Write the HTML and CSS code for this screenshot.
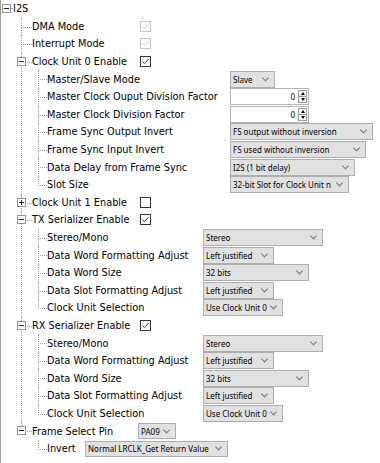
FILE: index.html
```html
<!DOCTYPE html>
<html>
<head>
<meta charset="utf-8">
<link rel="stylesheet" href="styles.css">
</head>
<body>
<div class="panel">
  <ul class="tree">
    <li class="node">
      <span class="exp"></span>
      <div class="row"><span class="label">I2S</span></div>
      <ul class="branch">
        <li class="node">
          <div class="row"><span class="label">DMA Mode</span><span class="cb cb--disabled"><svg viewBox="0 0 9 9"><path d="M1.5 4.5l2 2 4-4.5"/></svg></span></div>
        </li>
        <li class="node">
          <div class="row"><span class="label">Interrupt Mode</span><span class="cb cb--disabled"><svg viewBox="0 0 9 9"><path d="M1.5 4.5l2 2 4-4.5"/></svg></span></div>
        </li>
        <li class="node">
          <span class="exp"></span>
          <div class="row"><span class="label">Clock Unit 0 Enable</span><span class="cb"><svg viewBox="0 0 9 9"><path d="M1.5 4.5l2 2 4-4.5"/></svg></span></div>
          <ul class="branch branch--sub branch--clock">
            <li class="node"><div class="row"><span class="label">Master/Slave Mode</span><span class="combo w45"><span class="combo-text">Slave</span></span></div></li>
            <li class="node"><div class="row"><span class="label">Master Clock Ouput Division Factor</span><span class="spin"><span class="spin-val">0</span><span class="spin-btns"><i class="spin-up"></i><i class="spin-down"></i></span></span></div></li>
            <li class="node"><div class="row"><span class="label">Master Clock Division Factor</span><span class="spin"><span class="spin-val">0</span><span class="spin-btns"><i class="spin-up"></i><i class="spin-down"></i></span></span></div></li>
            <li class="node"><div class="row"><span class="label">Frame Sync Output Invert</span><span class="combo w143"><span class="combo-text">FS output without inversion</span></span></div></li>
            <li class="node"><div class="row"><span class="label">Frame Sync Input Invert</span><span class="combo w136"><span class="combo-text">FS used without inversion</span></span></div></li>
            <li class="node"><div class="row"><span class="label">Data Delay from Frame Sync</span><span class="combo w125"><span class="combo-text">I2S (1 bit delay)</span></span></div></li>
            <li class="node"><div class="row"><span class="label">Slot Size</span><span class="combo w119"><span class="combo-text">32-bit Slot for Clock Unit n</span></span></div></li>
          </ul>
        </li>
        <li class="node">
          <span class="exp exp--plus"></span>
          <div class="row"><span class="label">Clock Unit 1 Enable</span><span class="cb"></span></div>
        </li>
        <li class="node">
          <span class="exp"></span>
          <div class="row"><span class="label">TX Serializer Enable</span><span class="cb"><svg viewBox="0 0 9 9"><path d="M1.5 4.5l2 2 4-4.5"/></svg></span></div>
          <ul class="branch branch--sub branch--serial">
            <li class="node"><div class="row"><span class="label">Stereo/Mono</span><span class="combo w120"><span class="combo-text">Stereo</span></span></div></li>
            <li class="node"><div class="row"><span class="label">Data Word Formatting Adjust</span><span class="combo w71"><span class="combo-text">Left justified</span></span></div></li>
            <li class="node"><div class="row"><span class="label">Data Word Size</span><span class="combo w106"><span class="combo-text">32 bits</span></span></div></li>
            <li class="node"><div class="row"><span class="label">Data Slot Formatting Adjust</span><span class="combo w71"><span class="combo-text">Left justified</span></span></div></li>
            <li class="node"><div class="row"><span class="label">Clock Unit Selection</span><span class="combo w80"><span class="combo-text">Use Clock Unit 0</span></span></div></li>
          </ul>
        </li>
        <li class="node">
          <span class="exp"></span>
          <div class="row"><span class="label">RX Serializer Enable</span><span class="cb"><svg viewBox="0 0 9 9"><path d="M1.5 4.5l2 2 4-4.5"/></svg></span></div>
          <ul class="branch branch--sub branch--serial">
            <li class="node"><div class="row"><span class="label">Stereo/Mono</span><span class="combo w120"><span class="combo-text">Stereo</span></span></div></li>
            <li class="node"><div class="row"><span class="label">Data Word Formatting Adjust</span><span class="combo w71"><span class="combo-text">Left justified</span></span></div></li>
            <li class="node"><div class="row"><span class="label">Data Word Size</span><span class="combo w106"><span class="combo-text">32 bits</span></span></div></li>
            <li class="node"><div class="row"><span class="label">Data Slot Formatting Adjust</span><span class="combo w71"><span class="combo-text">Left justified</span></span></div></li>
            <li class="node"><div class="row"><span class="label">Clock Unit Selection</span><span class="combo w80"><span class="combo-text">Use Clock Unit 0</span></span></div></li>
          </ul>
        </li>
        <li class="node">
          <span class="exp"></span>
          <div class="row"><span class="label">Frame Select Pin</span><span class="combo combo--small w38"><span class="combo-text">PA09</span></span></div>
          <ul class="branch branch--sub branch--pin">
            <li class="node"><div class="row"><span class="label">Invert</span><span class="combo combo--small w143"><span class="combo-text">Normal LRCLK_Get Return Value</span></span></div></li>
          </ul>
        </li>
      </ul>
    </li>
  </ul>
</div>
</body>
</html>
```

FILE: styles.css
```css
* { box-sizing: border-box; }

html, body {
  margin: 0;
  padding: 0;
  background: #fff;
}

body {
  width: 380px;
  height: 463px;
  overflow: hidden;
  font-family: "DejaVu Sans", Tahoma, sans-serif;
  font-size: 9.75px;
  color: #000;
}

.panel {
  height: 463px;
  border-left: 1px solid #a0a0a0;
}

ul {
  list-style: none;
  margin: 0;
  padding: 0;
}

.tree { padding-left: 12px; }

.node { position: relative; }

.row {
  display: flex;
  align-items: center;
  height: 17.6px;
  white-space: nowrap;
}

.label { flex: none; }

/* level 1 */
.branch { padding-left: 19px; }
.branch > li > .row > .label { width: 106px; }

.branch > li::before {
  content: "";
  position: absolute;
  left: -11px;
  top: 0;
  width: 10px;
  height: 9px;
  border-left: 1px dotted #a0a0a0;
  border-bottom: 1px dotted #a0a0a0;
}

.branch > li:not(:last-child)::after {
  content: "";
  position: absolute;
  left: -11px;
  top: 9px;
  bottom: 0;
  border-left: 1px dotted #a0a0a0;
}

/* level 2 */
.branch--sub { padding-left: 15px; }
.branch--sub > li::before,
.branch--sub > li:not(:last-child)::after { left: -9px; }
.branch--sub > li::before { width: 8px; }

.branch--clock > li > .row > .label { width: 183px; }
.branch--serial > li > .row > .label { width: 156px; }
.branch--pin > li > .row > .label { width: 38px; }

/* expander boxes */
.exp {
  position: absolute;
  left: -15px;
  top: 4px;
  width: 9px;
  height: 9px;
  border: 1px solid #939393;
  background: #fff;
  z-index: 2;
}
.exp::before {
  content: "";
  position: absolute;
  left: 1px;
  top: 3px;
  width: 5px;
  height: 1px;
  background: #222;
}
.exp--plus::after {
  content: "";
  position: absolute;
  left: 3px;
  top: 1px;
  width: 1px;
  height: 5px;
  background: #222;
}
.tree > li > .exp { left: -11px; }
.tree > li > .row::before {
  content: "";
  width: 2px;
  margin-left: -3px;
  margin-right: 1px;
  border-top: 1px dotted #a0a0a0;
}

/* checkboxes */
.cb {
  display: flex;
  align-items: center;
  justify-content: center;
  width: 11px;
  height: 11px;
  margin-left: 2px;
  border: 1px solid #333;
  background: #fff;
}
.cb svg {
  width: 9px;
  height: 9px;
  fill: none;
  stroke: #333;
  stroke-width: 1;
}
.cb--disabled { border-color: #c4c4c4; }
.cb--disabled svg { stroke: #c4c4c4; }

/* combo boxes */
.combo {
  display: flex;
  align-items: center;
  height: 17px;
  padding: 0 6px 0 2px;
  background: #e1e1e1;
  border: 1px solid #adadad;
  font-family: "Noto Sans", sans-serif;
  font-size: 8px;
  color: #000;
  overflow: hidden;
}
.combo--small { height: 16px; }
.combo-text {
  flex: 1;
  overflow: hidden;
}
.combo::after {
  content: "";
  flex: none;
  margin-left: 2px;
  width: 4px;
  height: 4px;
  border-right: 1px solid #707070;
  border-bottom: 1px solid #707070;
  transform: translateY(-1.5px) rotate(45deg);
}

.w38 { width: 38px; }
.w45 { width: 45px; }
.w71 { width: 71px; }
.w80 { width: 80px; }
.w106 { width: 106px; }
.w119 { width: 119px; }
.w120 { width: 120px; }
.w125 { width: 125px; }
.w136 { width: 136px; }
.w143 { width: 143px; }

/* numeric spinners */
.spin {
  display: flex;
  width: 79px;
  height: 17px;
  border: 1px solid #b5b5b5;
  background: #fff;
  font-family: "Noto Sans", sans-serif;
  font-size: 8px;
}
.spin-val {
  flex: 1;
  display: flex;
  align-items: center;
  justify-content: flex-end;
  padding-right: 3px;
}
.spin-btns {
  display: flex;
  flex-direction: column;
  width: 10px;
  padding: 1px 1px 1px 0;
}
.spin-btns i {
  flex: 1;
  display: flex;
  align-items: center;
  justify-content: center;
  border: 1px solid #9a9a9a;
  background: #fdfdfd;
}
.spin-btns i + i { border-top: none; }
.spin-up::before {
  content: "";
  border-left: 2px solid transparent;
  border-right: 2px solid transparent;
  border-bottom: 3px solid #000;
}
.spin-down::before {
  content: "";
  border-left: 2px solid transparent;
  border-right: 2px solid transparent;
  border-top: 3px solid #000;
}
```
